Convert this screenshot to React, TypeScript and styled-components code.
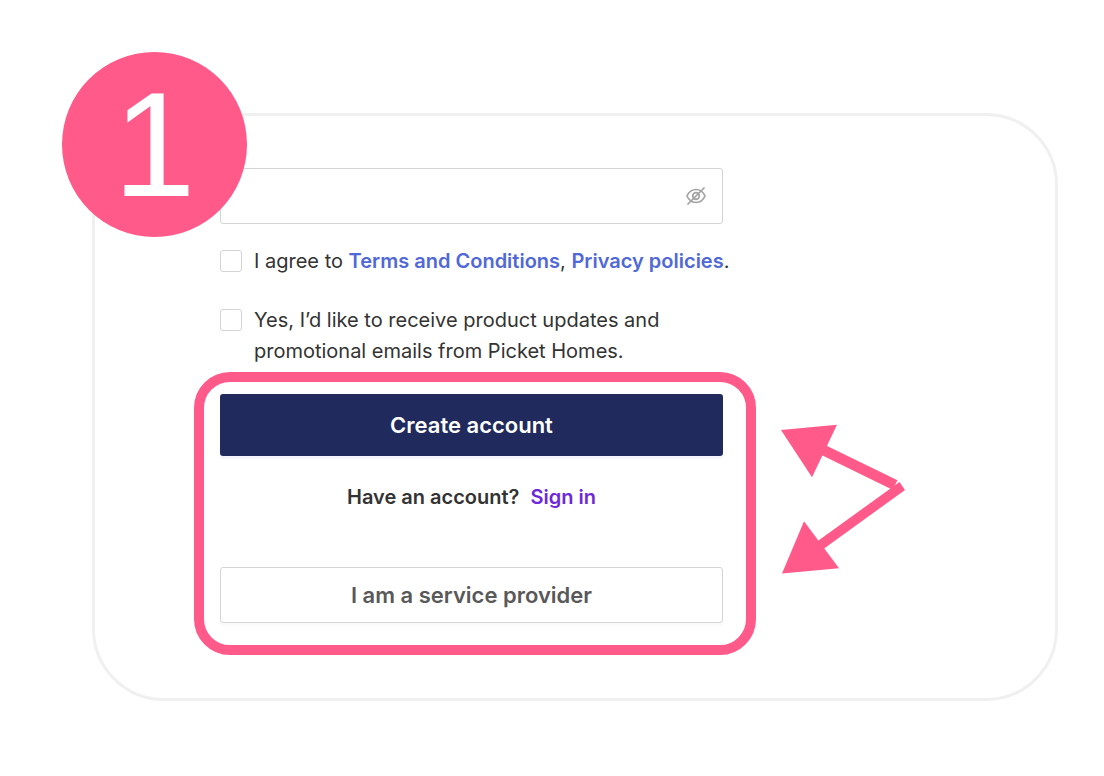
import React from "react";
import styled, { createGlobalStyle } from "styled-components";

const pink = "#ff5a8a";

const GlobalStyle = createGlobalStyle`
  *, *::before, *::after { box-sizing: border-box; }
  body {
    margin: 0;
    background: #fff;
    color: #333;
    font-family: Inter, "Liberation Sans", sans-serif;
  }
`;

const Page = styled.main`
  position: relative;
  padding: 113px 46px 75px 92px;
`;

const StepBadge = styled.div`
  position: absolute;
  top: 52px;
  left: 62px;
  display: grid;
  place-items: center;
  width: 185px;
  height: 185px;
  border-radius: 50%;
  background: ${pink};
  color: #fff;
  font: 148px/1 "Liberation Sans", Arial, sans-serif;
`;

const Card = styled.section`
  padding: 52px 24px 43px 99px;
  border: 3px solid #f0f0f0;
  border-radius: 72px;
`;

const Form = styled.form`
  display: flex;
  flex-direction: column;
`;

const Fields = styled.div`
  display: flex;
  flex-direction: column;
  width: 503px;
  margin-left: 26px;
`;

const PasswordBox = styled.div`
  display: flex;
  align-items: center;
  height: 56px;
  margin-bottom: 22px;
  padding-right: 16px;
  border: 1px solid #d4d4d4;
  border-radius: 3px;
`;

const PasswordInput = styled.input`
  flex: 1;
  min-width: 0;
  height: 100%;
  padding: 0 16px;
  border: 0;
  outline: 0;
  background: transparent;
  font: inherit;
  font-size: 20px;
`;

const IconButton = styled.button`
  display: flex;
  padding: 0;
  border: 0;
  background: none;
`;

const CheckRow = styled.div<{ $oneLine?: boolean }>`
  display: flex;
  gap: 12px;
  margin-bottom: 28px;
  font-size: 20px;
  line-height: 31px;
  white-space: ${(p) => (p.$oneLine ? "nowrap" : "normal")};

  &:last-child { margin-bottom: 5px; }
`;

const Checkbox = styled.input`
  appearance: none;
  flex: none;
  width: 22px;
  height: 22px;
  margin: 4px 0;
  border: 1px solid #d4d4d4;
  border-radius: 3px;
  background: #fff;
`;

const Link = styled.a<{ $color: string }>`
  color: ${(p) => p.$color};
  font-weight: 600;
  text-decoration: none;
`;

const CalloutRow = styled.div`
  display: flex;
  align-items: flex-start;
  gap: 24px;
`;

const Callout = styled.div`
  display: flex;
  flex-direction: column;
  flex: none;
  width: 562px;
  padding: 12px 23px 22px 16px;
  border: 10px solid ${pink};
  border-radius: 36px;
`;

const Button = styled.button<{ $primary?: boolean }>`
  height: ${(p) => (p.$primary ? 62 : 56)}px;
  border: ${(p) => (p.$primary ? "0" : "1px solid #d4d4d4")};
  border-radius: 3px;
  background: ${(p) => (p.$primary ? "#202a5c" : "#fff")};
  color: ${(p) => (p.$primary ? "#fff" : "#595959")};
  box-shadow: 0 3px 0 ${(p) => (p.$primary ? "#f5f5fb" : "#fafafa")};
  font: inherit;
  font-size: 22px;
  font-weight: 600;
`;

const SignIn = styled.p`
  display: flex;
  justify-content: center;
  gap: 11px;
  margin: 26px 0 54px;
  font-size: 20px;
  font-weight: 600;
  line-height: 31px;
`;

const Arrows = styled.svg`
  flex: none;
  margin-top: 52px;
`;

function HiddenEye() {
  return (
    <svg width="20" height="20" viewBox="0 0 20 20" fill="none" stroke="#a3a3a3" strokeWidth="1.7" aria-hidden="true">
      <path d="M1 10C3 5.500 6 3.500 10 3.500s7 2 9 6.500c-2 4.500-5 6.500-9 6.500S3 14.500 1 10Z" />
      <circle cx="10" cy="10" r="3.300" />
      <path d="M1.500 18.500 18.500 1.500" />
    </svg>
  );
}

export default function App() {
  return (
    <>
      <GlobalStyle />
      <Page>
        <Card>
          <Form onSubmit={(e) => e.preventDefault()}>
            <Fields>
              <PasswordBox>
                <PasswordInput type="password" aria-label="Password" />
                <IconButton type="button" aria-label="Show password">
                  <HiddenEye />
                </IconButton>
              </PasswordBox>
              <CheckRow $oneLine>
                <Checkbox type="checkbox" id="terms" />
                <label htmlFor="terms">
                  I agree to <Link $color="#5068d8" href="#terms">Terms and Conditions</Link>,{" "}
                  <Link $color="#5068d8" href="#privacy">Privacy policies</Link>.
                </label>
              </CheckRow>
              <CheckRow>
                <Checkbox type="checkbox" id="updates" />
                <label htmlFor="updates">
                  Yes, I’d like to receive product updates and promotional emails from Picket Homes.
                </label>
              </CheckRow>
            </Fields>
            <CalloutRow>
              <Callout>
                <Button $primary type="submit">Create account</Button>
                <SignIn>
                  Have an account? <Link $color="#6d28d9" href="#signin">Sign in</Link>
                </SignIn>
                <Button type="button">I am a service provider</Button>
              </Callout>
              <Arrows width="128" height="152" viewBox="780 424 128 152" fill={pink} aria-hidden="true">
                <path d="M781 430 837 424.700 812 477.300Z" />
                <path d="M825 445 897.500 480.300 895 485 893 490 820.500 454.500Z" />
                <path d="M782 573.500 804 521.300 839 568.300Z" />
                <path d="M815 543 899.500 482 905 490 821 550.700Z" />
              </Arrows>
            </CalloutRow>
          </Form>
        </Card>
        <StepBadge>1</StepBadge>
      </Page>
    </>
  );
}
